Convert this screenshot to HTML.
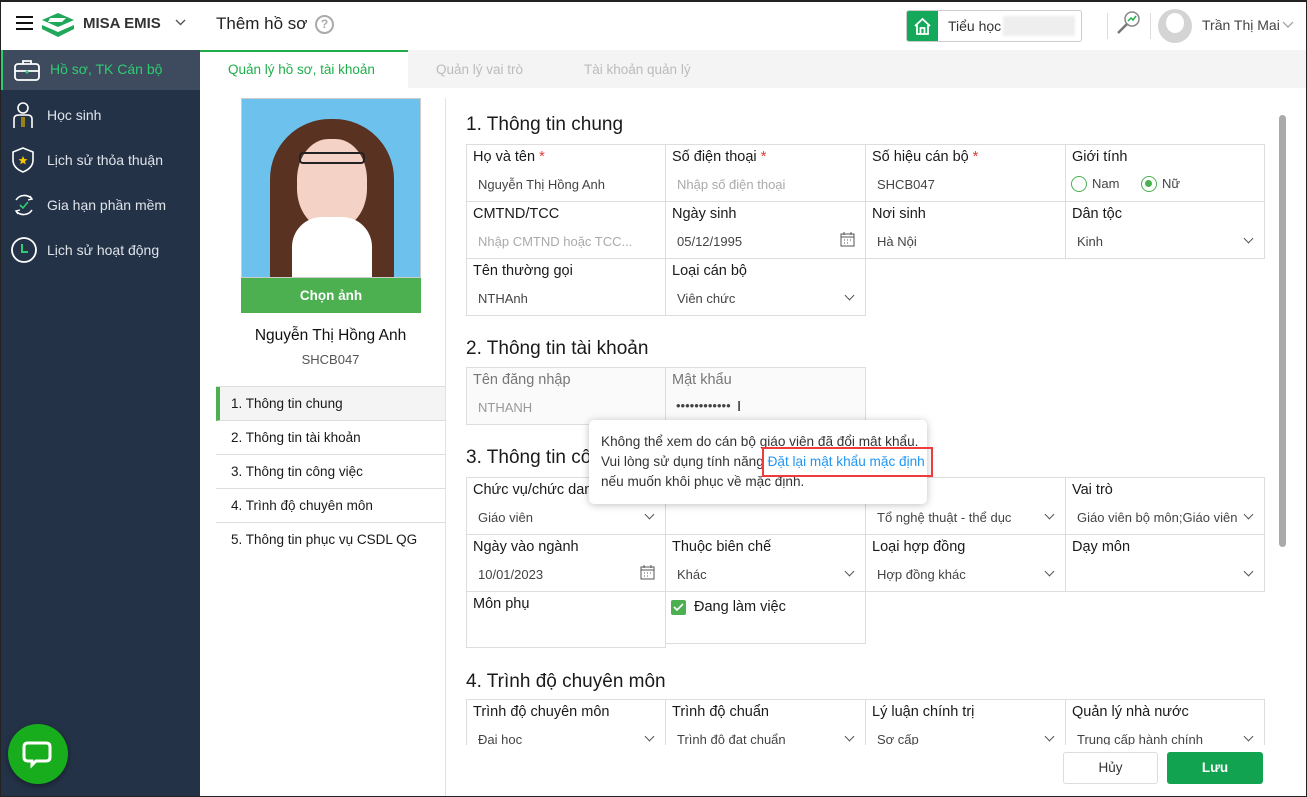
<!DOCTYPE html>
<html><head><meta charset="utf-8">
<style>
*{box-sizing:border-box;margin:0;padding:0}
body{width:1307px;height:797px;position:relative;overflow:hidden;font-family:"Liberation Sans",sans-serif;background:#fff;color:#222}
.a{position:absolute}
.frame{position:absolute;left:0;top:0;width:1307px;height:797px;border:1px solid #222;border-top:2px solid #222;pointer-events:none;z-index:50}
.side{left:0;top:50px;width:200px;height:747px;background:#243247}
.si{position:absolute;left:0;width:200px;height:42px;color:#dfe4ea;font-size:14px;line-height:42px;padding-left:47px}
.c{position:absolute;border:1px solid #ddd;background:#fff}
.l{position:absolute;left:6px;top:4px;font-size:14.5px;color:#1a1a1a;white-space:nowrap}
.v{position:absolute;left:11px;top:32px;font-size:13px;color:#444;white-space:nowrap}
.ph{color:#aaa}
.ch{position:absolute;right:12px;top:33px;width:7px;height:7px;border-right:1.6px solid #555;border-bottom:1.6px solid #555;transform:rotate(45deg)}
.st{color:#e53935}
h2{position:absolute;left:466px;font-size:19px;font-weight:normal;color:#1a1a1a}
.mi{position:absolute;left:216px;width:229px;height:34px;border-bottom:1px solid #ddd;font-size:13.5px;line-height:34px;padding-left:15px;color:#1a1a1a}
</style></head><body>
<div class="frame"></div>

<!-- header -->
<div class="a" style="left:0;top:0;width:1307px;height:50px;background:#fff;box-shadow:0 1px 3px rgba(0,0,0,.1)"></div>
<div class="a" style="left:16px;top:16px;width:17px;height:2px;background:#111;box-shadow:0 6px 0 #111,0 12px 0 #111"></div>
<svg class="a" style="left:40px;top:10px" width="36" height="28" viewBox="0 0 36 28"><path d="M2 10 L18 3 L34 10 L18 17Z" fill="#1fa85a"/><path d="M2 15 L18 22 L34 15 L34 19 L18 27 L2 19Z" fill="#1fa85a"/><path d="M10 8 L26 8 L22 12 L8 12Z" fill="#fff"/></svg>
<div class="a" style="left:83px;top:15px;font-size:15px;font-weight:bold;color:#333">MISA EMIS</div>
<svg class="a" style="left:175px;top:19px" width="11" height="8"><path d="M1 1 L5.5 5.5 L10 1" stroke="#555" fill="none" stroke-width="1.4"/></svg>
<div class="a" style="left:216px;top:14px;font-size:17px;color:#222">Thêm hồ sơ</div>
<div class="a" style="left:315px;top:15px;width:19px;height:19px;border:2px solid #aaa;border-radius:50%;color:#aaa;font-size:12px;font-weight:bold;text-align:center;line-height:15px">?</div>
<div class="a" style="left:906px;top:10px;width:176px;height:32px;border:1px solid #ccc;border-radius:3px;overflow:hidden">
 <div class="a" style="left:0;top:0;width:31px;height:32px;background:#14a85a"></div>
 <svg class="a" style="left:6px;top:6px" width="19" height="19" viewBox="0 0 19 19"><path d="M2 9 L9.5 2 L17 9 M4 8 V17 H15 V8 M7.5 17 V11 H11.5 V17" stroke="#fff" stroke-width="1.8" fill="none"/></svg>
 <div class="a" style="left:41px;top:7px;font-size:14px;color:#333">Tiểu học</div>
 <div class="a" style="left:96px;top:5px;width:72px;height:20px;background:#eee;filter:blur(1px)"></div>
</div>
<div class="a" style="left:1107px;top:13px;width:1px;height:26px;background:#ddd"></div>
<svg class="a" style="left:1115px;top:9px" width="28" height="28" viewBox="0 0 28 28"><circle cx="17" cy="10" r="7" stroke="#888" fill="none" stroke-width="1.5"/><path d="M12 15 L3 24" stroke="#777" stroke-width="2.5"/><path d="M13 12 L16 9 L18 11 L21 7" stroke="#1fae4a" stroke-width="1.5" fill="none"/></svg>
<div class="a" style="left:1150px;top:13px;width:1px;height:26px;background:#ddd"></div>
<div class="a" style="left:1158px;top:9px;width:34px;height:34px;border-radius:50%;background:#d4d4d4"></div>
<div class="a" style="left:1166px;top:13px;width:18px;height:20px;border-radius:50%;background:#fff"></div>
<div class="a" style="left:1202px;top:17px;font-size:14px;color:#444">Trần Thị Mai</div>
<svg class="a" style="left:1282px;top:21px" width="12" height="8"><path d="M1 1 L6 6 L11 1" stroke="#999" fill="none" stroke-width="1.2"/></svg>

<!-- sidebar -->
<div class="a side"></div>
<div class="a" style="left:0;top:50px;width:200px;height:40px;background:#3e4b5e;border-left:3px solid #2ecc71"></div>
<svg class="a" style="left:13px;top:58px" width="28" height="24" viewBox="0 0 28 24"><rect x="2" y="6" width="24" height="16" rx="3" stroke="#fff" stroke-width="1.8" fill="none"/><path d="M10 6 V3 H18 V6 M2 13 H26" stroke="#fff" stroke-width="1.8" fill="none"/><circle cx="14" cy="14" r="1.5" fill="#2ecc71"/></svg>
<div class="a" style="left:50px;top:61px;font-size:14px;color:#2ecc71">Hồ sơ, TK Cán bộ</div>
<div class="si" style="top:94px">Học sinh</div>
<div class="si" style="top:139px">Lịch sử thỏa thuận</div>
<div class="si" style="top:184px">Gia hạn phần mềm</div>
<div class="si" style="top:229px">Lịch sử hoạt động</div>
<svg class="a" style="left:11px;top:100px" width="24" height="30" viewBox="0 0 24 30"><circle cx="12" cy="8" r="5" stroke="#fff" stroke-width="1.6" fill="none"/><path d="M3 28 V19 Q3 15 8 15 H16 Q21 15 21 19 V28" stroke="#fff" stroke-width="1.6" fill="none"/><path d="M11 17 V27 M13 17 V27" stroke="#e6b800" stroke-width="1.2"/></svg>
<svg class="a" style="left:11px;top:146px" width="24" height="28" viewBox="0 0 24 28"><path d="M12 2 L22 6 V14 Q22 22 12 26 Q2 22 2 14 V6Z" stroke="#fff" stroke-width="1.6" fill="none"/><path d="M12 10 L13.4 13 L16.5 13.3 L14 15.3 L14.8 18.4 L12 16.7 L9.2 18.4 L10 15.3 L7.5 13.3 L10.6 13Z" fill="#f2c300"/></svg>
<svg class="a" style="left:11px;top:192px" width="26" height="26" viewBox="0 0 26 26"><path d="M5 8 A10 10 0 0 1 21 7 M21 18 A10 10 0 0 1 5 19" stroke="#fff" stroke-width="1.6" fill="none"/><path d="M19 4 L21 7 L17 8 M7 22 L5 19 L9 18" stroke="#fff" stroke-width="1.4" fill="none"/><path d="M9 13 L12 16 L17 10" stroke="#2ecc71" stroke-width="1.6" fill="none"/></svg>
<svg class="a" style="left:10px;top:236px" width="28" height="28" viewBox="0 0 28 28"><circle cx="14" cy="14" r="12" stroke="#fff" stroke-width="1.8" fill="none"/><path d="M12 8 V16 H18" stroke="#2ecc71" stroke-width="2" fill="none"/></svg>
<div class="a" style="left:8px;top:724px;width:60px;height:60px;border-radius:50%;background:#18ad1c;box-shadow:0 2px 6px rgba(0,0,0,.4)"></div>
<svg class="a" style="left:22px;top:740px" width="32" height="30" viewBox="0 0 32 30"><path d="M6 3 H24 Q28 3 28 7 V17 Q28 21 24 21 H14 L10 25 V21 H6 Q2 21 2 17 V7 Q2 3 6 3Z" stroke="#fff" stroke-width="3" fill="none"/></svg>

<!-- tabs -->
<div class="a" style="left:200px;top:50px;width:1107px;height:38px;background:#f4f4f4"></div>
<div class="a" style="left:200px;top:50px;width:208px;height:38px;background:#fff;border-top:2px solid #1fae4a"></div>
<div class="a" style="left:228px;top:62px;font-size:13.5px;color:#1fae4a">Quản lý hồ sơ, tài khoản</div>
<div class="a" style="left:436px;top:62px;font-size:13.5px;color:#bbb">Quản lý vai trò</div>
<div class="a" style="left:584px;top:62px;font-size:13.5px;color:#bbb">Tài khoản quản lý</div>

<!-- left profile -->
<div class="a" style="left:241px;top:98px;width:180px;height:180px;background:#6cc2ec;border:1px solid #ccc;overflow:hidden">
 <div class="a" style="left:28px;top:20px;width:124px;height:170px;border-radius:60px 60px 10px 10px;background:#5a3222"></div>
 <div class="a" style="left:55px;top:40px;width:70px;height:90px;border-radius:45%;background:#f4d3c6"></div>
 <div class="a" style="left:57px;top:53px;width:66px;height:12px;border:2px solid #222;border-radius:4px"></div>
 <div class="a" style="left:50px;top:118px;width:80px;height:70px;background:#fff;border-radius:30px 30px 0 0"></div>
</div>
<div class="a" style="left:241px;top:278px;width:180px;height:35px;background:#4caf50;color:#fff;font-size:13.5px;font-weight:bold;text-align:center;line-height:35px">Chọn ảnh</div>
<div class="a" style="left:216px;top:327px;width:229px;text-align:center;font-size:15.5px;color:#111">Nguyễn Thị Hồng Anh</div>
<div class="a" style="left:216px;top:352px;width:229px;text-align:center;font-size:13px;color:#555">SHCB047</div>
<div class="a" style="left:216px;top:386px;width:229px;height:1px;background:#ddd"></div>
<div class="mi" style="top:387px;background:#f4f4f4;border-left:4px solid #4caf50;padding-left:11px">1. Thông tin chung</div>
<div class="mi" style="top:421px">2. Thông tin tài khoản</div>
<div class="mi" style="top:455px">3. Thông tin công việc</div>
<div class="mi" style="top:489px">4. Trình độ chuyên môn</div>
<div class="mi" style="top:523px;border-bottom:none">5. Thông tin phục vụ CSDL QG</div>
<div class="a" style="left:445px;top:98px;width:1px;height:699px;background:#e2e2e2"></div>

<!-- scrollbar -->
<div class="a" style="left:1279px;top:115px;width:7px;height:432px;background:#aaa;border-radius:4px"></div>

<!-- section 1 -->
<h2 style="top:114px">1. Thông tin chung</h2>
<div class="c" style="left:466px;top:144px;width:200px;height:58px"><div class="l">Họ và tên <span class="st">*</span></div><div class="v">Nguyễn Thị Hồng Anh</div></div>
<div class="c" style="left:665px;top:144px;width:201px;height:58px"><div class="l">Số điện thoại <span class="st">*</span></div><div class="v ph">Nhập số điện thoại</div></div>
<div class="c" style="left:865px;top:144px;width:201px;height:58px"><div class="l">Số hiệu cán bộ <span class="st">*</span></div><div class="v">SHCB047</div></div>
<div class="c" style="left:1065px;top:144px;width:200px;height:58px"><div class="l">Giới tính</div>
 <div class="a" style="left:5px;top:31px;width:16px;height:16px;border:1.5px solid #4caf50;border-radius:50%"></div><div class="a" style="left:26px;top:31px;font-size:13px;color:#444">Nam</div>
 <div class="a" style="left:75px;top:31px;width:16px;height:16px;border:1.5px solid #4caf50;border-radius:50%"><div class="a" style="left:3px;top:3px;width:7px;height:7px;border-radius:50%;background:#4caf50"></div></div><div class="a" style="left:96px;top:31px;font-size:13px;color:#444">Nữ</div></div>
<div class="c" style="left:466px;top:201px;width:200px;height:58px"><div class="l">CMTND/TCC</div><div class="v ph">Nhập CMTND hoặc TCC...</div></div>
<div class="c" style="left:665px;top:201px;width:201px;height:58px"><div class="l">Ngày sinh</div><div class="v">05/12/1995</div>
 <svg class="a" style="right:10px;top:30px" width="15" height="15" viewBox="0 0 15 15"><rect x="1" y="2" width="13" height="12" stroke="#555" fill="none"/><path d="M1 5 H14 M4 0 V3 M11 0 V3 M4 8 H5 M7 8 H8 M10 8 H11 M4 11 H5 M7 11 H8" stroke="#555"/></svg></div>
<div class="c" style="left:865px;top:201px;width:201px;height:58px"><div class="l">Nơi sinh</div><div class="v">Hà Nội</div></div>
<div class="c" style="left:1065px;top:201px;width:200px;height:58px"><div class="l">Dân tộc</div><div class="v">Kinh</div><div class="ch"></div></div>
<div class="c" style="left:466px;top:258px;width:200px;height:58px"><div class="l">Tên thường gọi</div><div class="v">NTHAnh</div></div>
<div class="c" style="left:665px;top:258px;width:201px;height:58px"><div class="l">Loại cán bộ</div><div class="v">Viên chức</div><div class="ch"></div></div>

<!-- section 2 -->
<h2 style="top:338px">2. Thông tin tài khoản</h2>
<div class="c" style="left:466px;top:367px;width:200px;height:58px;background:#fafafa"><div class="l" style="color:#777">Tên đăng nhập</div><div class="v" style="color:#999">NTHANH</div></div>
<div class="c" style="left:665px;top:367px;width:201px;height:58px;background:#fafafa"><div class="l" style="color:#777">Mật khẩu</div><div class="v" style="left:10px;top:30px">••••••••••••</div><div class="a" style="left:71px;top:30px;font-size:15px;color:#222">I</div></div>

<!-- section 3 -->
<h2 style="top:447px">3. Thông tin công việc</h2>
<div class="c" style="left:466px;top:477px;width:200px;height:58px"><div class="l">Chức vụ/chức danh</div><div class="v">Giáo viên</div><div class="ch"></div></div>
<div class="c" style="left:665px;top:477px;width:201px;height:58px"></div>
<div class="c" style="left:865px;top:477px;width:201px;height:58px"><div class="v">Tổ nghệ thuật - thể dục</div><div class="ch"></div></div>
<div class="c" style="left:1065px;top:477px;width:200px;height:58px"><div class="l">Vai trò</div><div class="v" style="width:160px;overflow:hidden">Giáo viên bộ môn;Giáo viên</div><div class="ch"></div></div>
<div class="c" style="left:466px;top:534px;width:200px;height:58px"><div class="l">Ngày vào ngành</div><div class="v">10/01/2023</div>
 <svg class="a" style="right:10px;top:30px" width="15" height="15" viewBox="0 0 15 15"><rect x="1" y="2" width="13" height="12" stroke="#555" fill="none"/><path d="M1 5 H14 M4 0 V3 M11 0 V3 M4 8 H5 M7 8 H8 M10 8 H11 M4 11 H5 M7 11 H8" stroke="#555"/></svg></div>
<div class="c" style="left:665px;top:534px;width:201px;height:58px"><div class="l">Thuộc biên chế</div><div class="v">Khác</div><div class="ch"></div></div>
<div class="c" style="left:865px;top:534px;width:201px;height:58px"><div class="l">Loại hợp đồng</div><div class="v">Hợp đồng khác</div><div class="ch"></div></div>
<div class="c" style="left:1065px;top:534px;width:200px;height:58px"><div class="l">Dạy môn</div><div class="ch"></div></div>
<div class="c" style="left:466px;top:591px;width:200px;height:57px"><div class="l">Môn phụ</div></div>
<div class="c" style="left:665px;top:591px;width:201px;height:53px">
 <div class="a" style="left:5px;top:8px;width:15px;height:15px;background:#4caf50;border-radius:2px"></div>
 <svg class="a" style="left:7px;top:11px" width="11" height="9"><path d="M1 4 L4 7 L10 1" stroke="#fff" stroke-width="1.6" fill="none"/></svg>
 <div class="a" style="left:28px;top:7px;font-size:14.5px;color:#1a1a1a">Đang làm việc</div></div>

<!-- section 4 -->
<h2 style="top:671px">4. Trình độ chuyên môn</h2>
<div class="a" style="left:466px;top:699px;width:800px;height:46px;overflow:hidden">
<div class="c" style="left:0;top:0;width:200px;height:58px"><div class="l">Trình độ chuyên môn</div><div class="v">Đại học</div><div class="ch"></div></div>
<div class="c" style="left:199px;top:0;width:201px;height:58px"><div class="l">Trình độ chuẩn</div><div class="v">Trình độ đạt chuẩn</div><div class="ch"></div></div>
<div class="c" style="left:399px;top:0;width:201px;height:58px"><div class="l">Lý luận chính trị</div><div class="v">Sơ cấp</div><div class="ch"></div></div>
<div class="c" style="left:599px;top:0;width:200px;height:58px"><div class="l">Quản lý nhà nước</div><div class="v">Trung cấp hành chính</div><div class="ch"></div></div>
</div>
<div class="a" style="left:446px;top:745px;width:830px;height:52px;background:#fff"></div>
<div class="a" style="left:1063px;top:752px;width:95px;height:32px;border:1px solid #ddd;border-radius:3px;text-align:center;line-height:30px;font-size:13.5px;color:#333">Hủy</div>
<div class="a" style="left:1167px;top:752px;width:96px;height:32px;background:#12a351;border-radius:3px;text-align:center;line-height:32px;font-size:13.5px;color:#fff;font-weight:bold">Lưu</div>

<!-- tooltip -->
<div class="a" style="left:589px;top:420px;width:338px;height:84px;background:#fff;border-radius:5px;box-shadow:0 1px 8px rgba(0,0,0,.25);font-size:13.6px;color:#333;line-height:20px;padding:12px 0 0 12px;white-space:nowrap">Không thể xem do cán bộ giáo viên đã đổi mật khẩu.<br>Vui lòng sử dụng tính năng <span style="color:#2196f3">Đặt lại mật khẩu mặc định</span><br>nếu muốn khôi phục về mặc định.</div>
<div class="a" style="left:762px;top:447px;width:171px;height:30px;border:2.5px solid #ee3b3b"></div>
</body></html>
